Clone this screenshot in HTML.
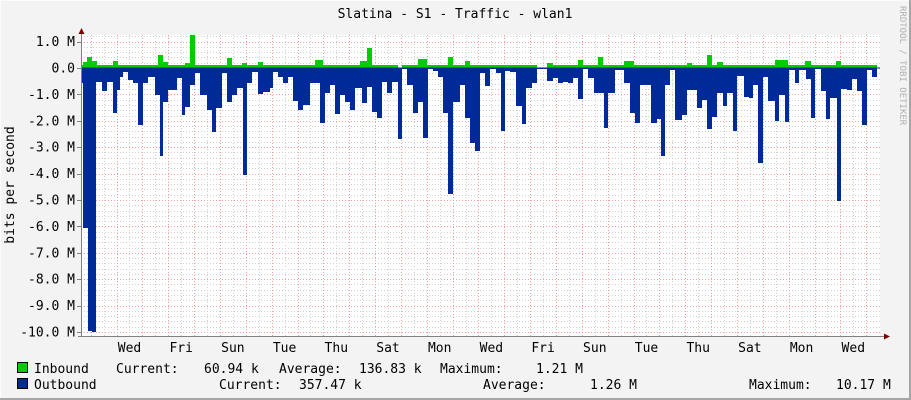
<!DOCTYPE html>
<html><head><meta charset="utf-8"><style>
html,body{margin:0;padding:0;background:#f3f3f3}
svg{display:block}
text{font-family:"DejaVu Sans Mono","Liberation Mono",monospace;fill:#000}
</style></head><body>
<svg width="911" height="400" viewBox="0 0 911 400" xmlns="http://www.w3.org/2000/svg">
<rect x="0" y="0" width="911" height="400" fill="#f3f3f3"/>
<rect x="0" y="0" width="911" height="1" fill="#fcfcfc"/>
<rect x="0" y="0" width="1" height="400" fill="#fcfcfc"/>
<rect x="909" y="0" width="2" height="400" fill="#a6a6a6"/>
<rect x="0" y="398" width="911" height="2" fill="#a6a6a6"/>
<rect x="81" y="35" width="799" height="301" fill="#ffffff"/>
<g id="grid"></g>
<path id="out" fill="#002A97"/>
<path id="inb" fill="#00CC00"/>
<line x1="81" y1="68" x2="880" y2="68" stroke="#002A97" stroke-width="1"/>
<line x1="81.5" y1="30" x2="81.5" y2="337" stroke="#808080"/>
<line x1="78" y1="336.5" x2="884" y2="336.5" stroke="#808080"/>
<polygon points="78.5,34 84.5,34 81.5,28" fill="#800000"/>
<polygon points="884,333.5 884,339.5 890,336.5" fill="#800000"/>
<g id="ylab" font-size="13" text-anchor="end"></g>
<g id="xlab" font-size="13" text-anchor="middle"></g>
<text x="455" y="18" font-size="13" text-anchor="middle">Slatina - S1 - Traffic - wlan1</text>
<text transform="translate(14,185) rotate(-90)" font-size="13" text-anchor="middle">bits per second</text>
<text transform="translate(900,6) rotate(90)" font-size="9" fill="#b0b0b0" style="fill:#b0b0b0">RRDTOOL / TOBI OETIKER</text>
<rect x="17.5" y="362.5" width="10" height="10" fill="#00CC00" stroke="#000"/>
<rect x="17.5" y="378.5" width="10" height="10" fill="#002A97" stroke="#000"/>
<g font-size="13" xml:space="preserve">
<text x="34" y="373">Inbound</text>
<text x="116" y="373">Current:</text>
<text x="204" y="373">60.94 k</text>
<text x="279" y="373">Average:</text>
<text x="359" y="373">136.83 k</text>
<text x="440" y="373">Maximum:</text>
<text x="536" y="373">1.21 M</text>
<text x="34" y="389">Outbound</text>
<text x="219" y="389">Current:</text>
<text x="299" y="389">357.47 k</text>
<text x="483" y="389">Average:</text>
<text x="590" y="389">1.26 M</text>
<text x="749" y="389">Maximum:</text>
<text x="836" y="389">10.17 M</text>
</g>
</svg>
<script>
var NS="http://www.w3.org/2000/svg";
function el(p,n,a,t){var e=document.createElementNS(NS,n);for(var k in a)e.setAttribute(k,a[k]);if(t)e.textContent=t;p.appendChild(e);return e;}
var g=document.getElementById("grid");
var z=68,pm=26.4;
for(var v=1.2;v>=-10.2;v-=0.2){var y=Math.round(z-v*pm)+0.5;if(y<35||y>336)continue;var major=Math.abs(v-Math.round(v))<0.01;
el(g,"line",{x1:81,x2:880,y1:y,y2:y,stroke:major?"#f2a0a0":"#d0d0d0","stroke-dasharray":"1,2"});}
for(var i=0;i<62;i++){var x=90.7+i*12.925;if(x>879)break;x=Math.round(x)+0.5;
el(g,"line",{x1:x,x2:x,y1:35,y2:336,stroke:(i%2==0)?"#f2a0a0":"#d0d0d0","stroke-dasharray":"1,2"});}
var yl=document.getElementById("ylab");
for(var v=1;v>=-10;v--){var y=z-v*pm;el(yl,"text",{x:75,y:y+4.5},(v==0?"0.0":(v.toFixed(1)))+(v==0?"":" M"));
el(yl,"line",{x1:77,x2:81,y1:Math.round(y)+0.5,y2:Math.round(y)+0.5,stroke:"#808080"});}
var xl=document.getElementById("xlab");
["Wed","Fri","Sun","Tue","Thu","Sat","Mon","Wed","Fri","Sun","Tue","Thu","Sat","Mon","Wed"].forEach(function(d,i){el(xl,"text",{x:129.5+i*51.7,y:352},d);});
var o=[[81,83,83],[83,88,228],[88,92,331],[92,96,333],[96,97,82],
[97,102,82],[102,107,91],[107,113,82],[113,117,113],[117,120,90],[120,123,77],[123,128,72],[128,133,80],[133,138,83],[138,143,125],[143,148,83],[148,155,77],[155,160,95],[160,163,156],[163,168,102],[168,177,90],[177,182,78],[182,185,115],[185,190,107],[190,195,85],[195,200,73],[200,207,95],[207,212,110],[212,216,132],[216,222,108],[222,227,73],[227,232,102],[232,237,95],[237,243,88],[243,247,175],[247,252,83],[252,258,72],[258,263,94],[263,270,92],[270,273,88],[273,278,72],[278,283,77],[283,288,83],[288,293,77],[293,298,101],[298,303,110],[303,310,105],[310,320,83],[320,325,123],[325,330,93],[330,335,85],[335,340,114],[340,345,95],[345,350,102],[350,355,110],[355,362,88],[362,367,103],[367,372,87],[372,377,112],[377,382,118],[382,387,82],[387,392,93],[392,398,82],[398,402,139],[402,407,69],[407,413,85],[413,418,113],[418,423,102],[423,428,138],[428,433,69],[433,438,71],[438,443,77],[443,448,113],[448,453,194],[453,460,102],[460,465,85],[465,470,118],[470,475,143],[475,480,151],
[480,485,73],[485,490,86],[490,496,69],[496,501,73],[501,505,131],[505,510,71],[510,516,72],[516,522,106],[522,526,124],[526,532,88],[532,537,83],[537,547,69],[547,553,81],[553,558,78],[558,563,83],[563,568,82],[568,573,83],[573,578,78],[578,583,99],[583,588,69],[588,594,78],[594,604,93],[604,608,128],[608,615,93],[615,624,70],[624,630,83],[630,635,113],[635,640,123],[640,651,85],[651,657,123],[657,661,119],[661,665,156],[665,670,85],[670,675,70],[675,682,120],[682,687,115],[687,697,90],[697,702,108],[702,707,100],[707,712,129],[712,717,117],[717,723,93],[723,727,106],[727,733,93],[733,737,131],[737,744,76],[744,749,97],[749,753,98],[753,758,85],[758,763,163],[763,768,77],[768,775,101],[775,779,121],[779,785,95],[785,789,122],[789,795,70],[795,799,83],[799,806,70],[806,811,79],[811,815,118],[815,821,69],[821,826,91],[826,830,119],[830,837,98],[837,841,201],[841,847,89],[847,852,90],[852,857,79],[857,862,91],[862,867,125],[867,872,70],[872,877,77]];
var d="";o.forEach(function(s){var b=Math.min(s[2],332);d+="M"+s[0]+" 68V"+b+"H"+s[1]+"V68Z";});
document.getElementById("out").setAttribute("d",d);
var sp=[[83,87,62],[87,92,57],[92,97,61],[113,118,61],[158,163,55],[163,168,62],[190,195,35],[185,190,63],[227,232,58],[242,247,63],[258,263,62],[315,323,60],[360,367,61],[367,372,48],[418,427,59],[448,453,57],[465,470,61],[547,553,63],[578,583,60],[598,603,57],[624,634,61],[687,692,63],[707,712,55],[717,723,62],[775,788,60],[805,811,61],[836,841,61]];
var di="M82 68V65H398V68ZM402 68V65H537V68ZM547 68V65H877V68Z";
sp.forEach(function(s){di+="M"+s[0]+" 68V"+s[2]+"H"+s[1]+"V68Z";});
document.getElementById("inb").setAttribute("d",di);
</script>
</body></html>
